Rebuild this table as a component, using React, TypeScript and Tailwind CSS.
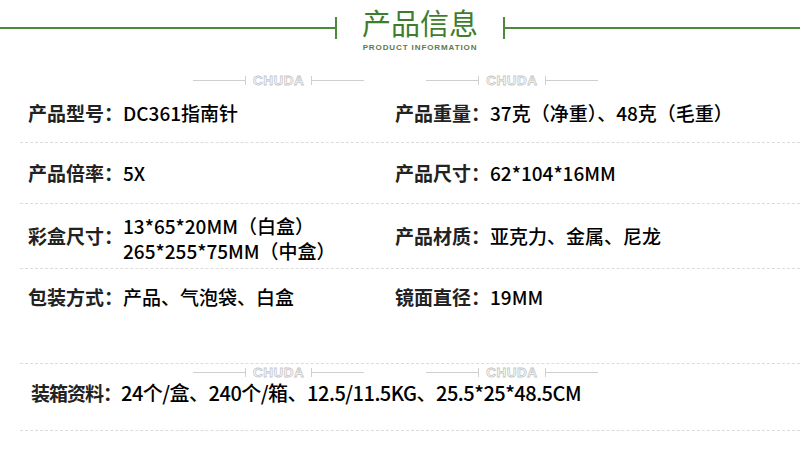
export default function App() {
  return (
    <div className="relative w-[800px] h-[455px] overflow-hidden bg-white font-['Noto_Sans_CJK_SC',sans-serif] text-[#111]">
      <Header />
      <Watermark />

      <div className="ml-[20px]">
        <Row className="h-[53px] items-start pt-[10px]">
          <Item label="产品型号" value="DC361指南针" />
          <Item label="产品重量" value="37克（净重）、48克（毛重）" />
        </Row>
        <Row className="h-[61px] items-center">
          <Item label="产品倍率" value="5X" />
          <Item label="产品尺寸" value="62*104*16MM" />
        </Row>
        <Row className="h-[65px] items-center">
          <div className="flex items-center">
            <Label text="彩盒尺寸" />
            <div className="text-[19px] leading-[25px] pt-[3px] font-medium text-black">
              <div>13*65*20MM（白盒）</div>
              <div>265*255*75MM（中盒）</div>
            </div>
          </div>
          <Item label="产品材质" value="亚克力、金属、尼龙" />
        </Row>
        <Row className="h-[95px] items-start pt-[15px]">
          <Item label="包装方式" value="产品、气泡袋、白盒" />
          <Item label="镜面直径" value="19MM" />
        </Row>
        <div className="relative h-[67px] border-b border-dashed border-[#dcdcdc] pl-[11px] pt-[16px]">
          <div className="absolute left-[-20px] top-[2px]">
            <Watermark small />
          </div>
          <div className="flex items-center leading-[26px]">
            <span className="text-[19px] font-bold text-[#222] tracking-[-1px]">装箱资料：</span>
            <span className="text-[20px] font-medium tracking-[-0.5px] text-black">24个/盒、240个/箱、12.5/11.5KG、25.5*25*48.5CM</span>
          </div>
        </div>
      </div>
    </div>
  );
}

function Header() {
  return (
    <div className="flex items-start h-[70px]">
      <div className="w-[337px] h-[22px] mt-[17px] flex items-center">
        <div className="flex-1 h-[2px] bg-[#4a8a3a]" />
        <div className="w-[2px] h-full bg-[#4a8a3a]" />
      </div>
      <div className="w-[166px] flex flex-col items-center pt-[6px]">
        <div className="text-[29px] leading-[32px] text-[#3f7d2c]">
          产品信息
        </div>
        <div className="mt-[5px] text-[8px] leading-[10px] font-bold tracking-[0.9px] text-[#5a7a50] font-['Liberation_Sans',sans-serif]">
          PRODUCT INFORMATION
        </div>
      </div>
      <div className="flex-1 h-[22px] mt-[17px] flex items-center">
        <div className="w-[2px] h-full bg-[#4a8a3a]" />
        <div className="flex-1 h-[2px] bg-[#4a8a3a]" />
      </div>
    </div>
  );
}

function Watermark({ small = false }: { small?: boolean }) {
  return (
    <div className={`flex items-center gap-[62px] pl-[193px] ${small ? "h-[12px]" : "h-[20px]"}`}>
      <Chuda />
      <Chuda />
    </div>
  );
}

function Chuda() {
  return (
    <div className="flex items-center">
      <div className="w-[52px] h-px bg-[#cfcfcf]" />
      <div className="w-px h-[9px] bg-[#cfcfcf]" />
      <span className="mx-[7px] text-[13.5px] leading-[11px] font-bold tracking-[0.5px] text-transparent [-webkit-text-stroke:0.8px_#c6c6c6] font-['Liberation_Sans',sans-serif]">
        CHUDA
      </span>
      <div className="w-px h-[9px] bg-[#cfcfcf]" />
      <div className="w-[52px] h-px bg-[#cfcfcf]" />
    </div>
  );
}

function Row({ className, children }: { className: string; children: React.ReactNode }) {
  return (
    <div className={`grid grid-cols-[367px_1fr] pl-[8px] border-b border-dashed border-[#dcdcdc] ${className}`}>
      {children}
    </div>
  );
}

function Label({ text }: { text: string }) {
  return (
    <span className="text-[19px] leading-[26px] font-bold text-[#222] whitespace-nowrap">
      {text}：
    </span>
  );
}

function Item({ label, value }: { label: string; value: string }) {
  return (
    <div className="flex items-center">
      <Label text={label} />
      <span className="text-[19px] leading-[26px] font-medium whitespace-nowrap text-black">{value}</span>
    </div>
  );
}
